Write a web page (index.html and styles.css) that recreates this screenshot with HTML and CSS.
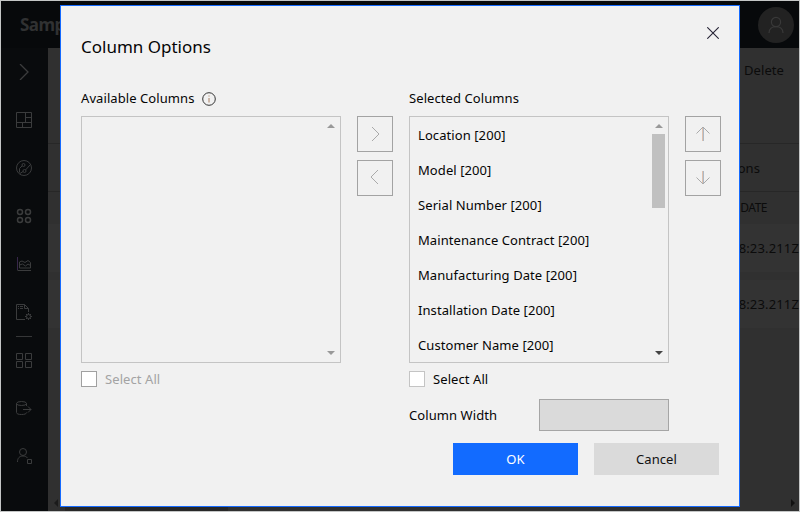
FILE: index.html
```html
<!DOCTYPE html>
<html lang="en">
<head>
<meta charset="utf-8">
<title>Column Options</title>
<link rel="stylesheet" href="styles.css">
</head>
<body>
<div class="app">
  <header class="topbar">
    <span class="brand">Sample</span>
    <span class="avatar"><svg width="18" height="18" viewBox="0 0 18 18"><circle cx="9" cy="6" r="4.6"/><path d="M2 17c0-4 3-6.4 7-6.4s7 2.400 7 6.400"/></svg></span>
  </header>
  <div class="body">
    <nav class="rail">
      <svg class="chev" viewBox="0 0 16 16"><path d="M4 0l8 8-8 8"/></svg>
      <svg viewBox="0 0 16 16"><path d="M.5.5h15v15H.5zM9.500.5v10M.5 10.500h15M9.500 5.500h6M6.500 10.500v5"/></svg>
      <svg viewBox="0 0 16 16"><circle cx="8" cy="8" r="7.500"/><circle cx="7.500" cy="5" r="1.500"/><circle cx="8.500" cy="11" r="1.500"/><path d="M6 6L3.500 8.500v4M9.500 10L14 5M4 13.500l3-2"/></svg>
      <svg class="heavy" viewBox="0 0 16 16"><circle cx="4" cy="4" r="2.500"/><circle cx="12" cy="4" r="2.500"/><circle cx="4" cy="12" r="2.500"/><circle cx="12" cy="12" r="2.500"/></svg>
      <svg viewBox="0 0 16 16"><path class="tint" d="M1.500 1v13"/><path d="M1.500 14.500H15M3.500 12V6L6 5l3 1.500L12 4.500l2.500 2V12zM3.500 9l3-1 3 2 2.500-2 2.500 1.500"/></svg>
      <svg viewBox="0 0 16 16"><path d="M9 15.500H.5V.5h8l4 4V8M8.500.5v4h4M2 2.500h1M4 2.500h3M2 4.500h1M4 4.500h3"/><circle cx="12.500" cy="12.500" r="2"/><path d="M12.500 9v1.500M12.500 14.500V16M9 12.500h1.500M14.500 12.500H16M10 10l1 1M15 10l-1 1M10 15l1-1M15 15l-1-1"/></svg>
      <i class="rule"></i>
      <svg viewBox="0 0 16 16"><path d="M.5 1.500h6v6h-6zM9.500 1.500h6v6h-6zM.5 9.500h6v6h-6zM9.500 9.500h6v6h-6z"/></svg>
      <svg viewBox="0 0 16 16"><ellipse cx="5.500" cy="3.500" rx="5" ry="2"/><path d="M.5 3.500v9c0 1.400 2 2 5 2s5-.6 5-2M10.500 3.500V6M7 9.500h8M12 6.500l3 3-3 3"/></svg>
      <svg viewBox="0 0 16 16"><circle cx="7" cy="4" r="3.500"/><path d="M1.500 14c0-4 2-6 5.500-6 2 0 3.500.7 4.500 2M11.500 11.500h4v4h-4z"/></svg>
    </nav>
    <main class="content">
      <div class="tools">Delete</div>
      <div class="pager">Actions</div>
      <div class="thead">DATE</div>
      <div class="row">2020-05-12T10:38:23.211Z</div>
      <div class="row">2020-05-12T10:38:23.211Z</div>
      <div class="hscroll"><i class="tri left"></i><i class="track"></i><i class="tri right"></i></div>
    </main>
  </div>
</div>

<section class="dialog" role="dialog">
  <div class="heading">
    <h1>Column Options</h1>
    <svg class="close" viewBox="0 0 12 12"><path d="M.3.3l11.400 11.400M11.700.3L.3 11.700"/></svg>
  </div>
  <div class="columns">
    <div class="picker">
      <div class="label"><span>Available Columns</span><svg class="info" viewBox="0 0 14 14"><circle cx="7" cy="7" r="6.300"/><path class="stem" d="M7 6v4.500M7 3.500v1"/></svg></div>
      <div class="list">
        <div class="items"></div>
        <div class="bar off"><i class="up"></i><i class="down"></i></div>
      </div>
      <label class="check muted"><i class="box"></i><span>Select All</span></label>
    </div>
    <div class="moves">
      <button><svg viewBox="0 0 16 16"><path d="M5 1l7 7-7 7"/></svg></button>
      <button><svg viewBox="0 0 16 16"><path d="M11 0L4 7l7 7"/></svg></button>
    </div>
    <div class="picker">
      <div class="label">Selected Columns</div>
      <div class="list">
        <div class="items">
          <div>Location [200]</div>
          <div>Model [200]</div>
          <div>Serial Number [200]</div>
          <div>Maintenance Contract [200]</div>
          <div>Manufacturing Date [200]</div>
          <div>Installation Date [200]</div>
          <div>Customer Name [200]</div>
        </div>
        <div class="bar"><i class="up"></i><i class="thumb"></i><i class="down"></i></div>
      </div>
      <label class="check"><i class="box light"></i><span>Select All</span></label>
    </div>
    <div class="moves order">
      <button><svg viewBox="0 0 16 16"><path class="warm" d="M7.500 1v14"/><path class="cool" d="M8.500 1v14"/><path d="M1.500 7.500L8 1l6.500 6.500"/></svg></button>
      <button><svg viewBox="0 0 16 16"><path class="warm" d="M7.500 1v13"/><path class="cool" d="M8.500 1v13"/><path d="M1.500 7.500L8 14l6.500-6.500"/></svg></button>
    </div>
  </div>
  <div class="width"><span>Column Width</span><input disabled></div>
  <div class="actions"><button class="ok">OK</button><button class="cancel">Cancel</button></div>
</section>
</body>
</html>
```
FILE: styles.css
```css
* { box-sizing: border-box; }
body {
  margin: 0;
  font: 13px/20px "Noto Sans", "Open Sans", sans-serif;
  letter-spacing: 0.08px;
  color: #050505;
  overflow: hidden;
}
svg { display: block; fill: none; stroke: currentColor; }
button, input { margin: 0; padding: 0; font: inherit; letter-spacing: inherit; border-radius: 0; }

.app {
  width: 800px;
  height: 512px;
  border: 1px solid #c4c6c6;
  display: flex;
  flex-direction: column;
  background: #303030;
}
.topbar {
  height: 47px;
  flex: none;
  background: #07090b;
  display: flex;
  justify-content: space-between;
  align-items: center;
  padding: 0 5px 0 19px;
  color: #303132;
}
.brand { font-size: 17px; font-weight: 700; letter-spacing: -0.5px; padding-top: 1px; }
.avatar {
  width: 36px;
  height: 36px;
  border-radius: 50%;
  background: #222;
  color: #393939;
  display: grid;
  place-items: center;
}
.avatar svg { stroke-width: 1.2; }
.body { flex: 1; display: flex; min-height: 0; }
.rail {
  width: 47px;
  background: #090b0d;
  color: #3b3c3d;
  padding: 16px 0 0 15px;
  display: flex;
  flex-direction: column;
  align-items: flex-start;
  gap: 32px;
}
.rail svg { width: 16px; height: 16px; flex: none; }
.rail .chev { stroke-width: 1.3; }
.rail .heavy { stroke-width: 1.5; }
.rail .tint { stroke: #37274a; }
.rule { width: 16px; height: 1px; background: #363738; margin: -16px 0 -17px; flex: none; }

.content { flex: 1; color: #0b0b0b; display: flex; flex-direction: column; align-items: stretch; text-align: right; min-width: 0; }
.tools { height: 96px; border-bottom: 1px solid #272727; padding: 12px 15px 0 0; }
.pager { height: 48px; border-bottom: 1px solid #272727; padding: 14px 39px 0 0; }
.thead { height: 32px; padding: 6px 32px 0 0; font-size: 12px; letter-spacing: -0.5px; }
.row { height: 48px; margin-bottom: 8px; background: #333; padding: 14px 0 0; letter-spacing: 0.15px; white-space: nowrap; }
.hscroll { margin-top: auto; height: 16px; display: flex; align-items: center; padding: 0 4px 0 5px; }
.track { width: 163px; height: 16px; margin-left: 7px; background: #272727; }
.tri { border: 4px solid transparent; border-left-width: 0; border-right: 4px solid #1b1b1b; }
.tri.left { margin-left: 1px; }
.tri.right { margin-left: auto; border-right-width: 0; border-left: 4px solid #111; }

.dialog {
  position: absolute;
  left: 60px;
  top: 5px;
  width: 680px;
  height: 502px;
  border: 1px solid #146aff;
  background: #f1f1f1;
  padding: 0 18px 0 20px;
}
.heading { height: 82px; display: flex; justify-content: space-between; padding: 21px 2px 0 0; }
h1 { margin: 0; font-size: 17px; line-height: 40px; font-weight: 400; letter-spacing: 0; }
.close { width: 12px; height: 12px; stroke: #262335; stroke-width: 1.1; }
.columns { display: flex; gap: 16px; }
.picker { width: 260px; }
.label { height: 28px; line-height: 20px; display: flex; gap: 7px; }
.info { width: 14px; height: 14px; margin-top: 4px; stroke: #333; }
.info .stem { stroke: #a87f62; }
.list { height: 247px; border: 1px solid #c4c4c4; display: flex; justify-content: space-between; }
.items { padding: 1px 0 0 8px; line-height: 35px; white-space: nowrap; overflow: hidden; }
.bar { width: 18px; display: flex; flex-direction: column; align-items: center; padding: 7px 1px 7px 0; }
.up, .down { border: 4px solid transparent; border-top: 0; border-bottom: 4px solid #999; }
.down { border-bottom: 0; border-top: 4px solid #444; margin-top: auto; }
.off .down { border-top-color: #999; }
.thumb { width: 13px; height: 74px; margin-top: 6px; background: #c0c0c0; }
.check { display: flex; align-items: center; gap: 8px; margin-top: 8px; height: 16px; }
.box { width: 16px; height: 16px; border: 1px solid #a0a0a0; background: #fff; }
.box.light { border-color: #c4c4c4; }
.muted { color: #a3a3a3; }
.moves { padding-top: 28px; display: flex; flex-direction: column; gap: 8px; }
.moves button { width: 36px; height: 36px; border: 1px solid #a3a3a3; background: transparent; display: grid; place-items: center; color: #aaa; }
.moves svg { width: 16px; height: 16px; }
.moves .warm { stroke: #dfc0ad; }
.moves .cool { stroke: #adb9c5; }
.width { display: flex; justify-content: space-between; align-items: center; height: 32px; margin: 12px 52px 0 328px; }
.width input { width: 130px; height: 32px; border: 1px solid #a5a5a5; background: #dadada; }
.actions { display: flex; justify-content: flex-end; gap: 16px; margin: 12px 2px 0 0; }
.actions button { width: 125px; height: 32px; border: 0; background: #dadada; color: #111; }
.actions .ok { background: #126bff; color: #fff; }
```
